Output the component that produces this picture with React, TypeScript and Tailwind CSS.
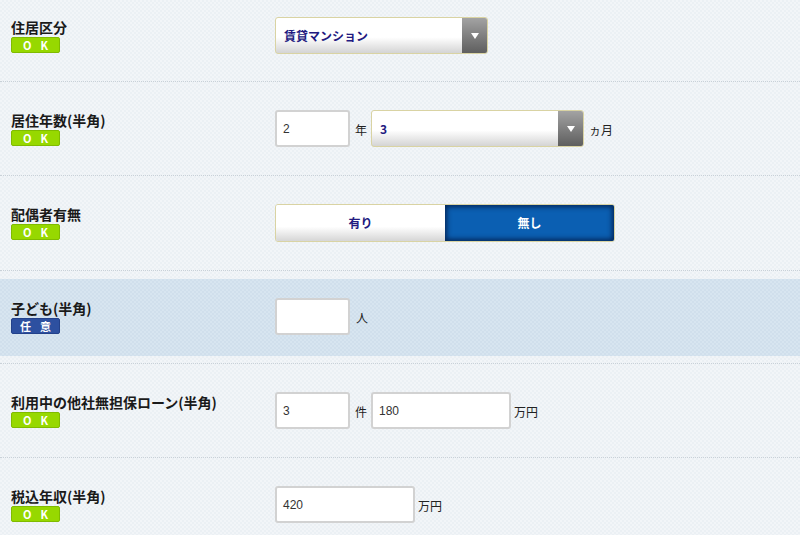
import React from 'react';

const jp = "font-['Noto_Sans_CJK_JP','Noto_Sans',sans-serif]";

type BadgeProps = { kind: 'ok' | 'optional' };

const Badge: React.FC<BadgeProps> = ({ kind }) => {
  const ok = kind === 'ok';
  return (
    <div
      className={`flex h-[16px] w-[49px] items-center justify-center gap-[9px] rounded-[2px] border text-[11px] leading-none font-bold text-white ${jp} ${
        ok ? 'border-[#80bb00] bg-[#97d800]' : 'border-[#23418a] bg-[#2d50a0]'
      }`}
    >
      {ok ? (
        <>
          <span>O</span>
          <span>K</span>
        </>
      ) : (
        <>
          <span>任</span>
          <span>意</span>
        </>
      )}
    </div>
  );
};

const Label: React.FC<{ text: string; kind?: 'ok' | 'optional' }> = ({
  text,
  kind = 'ok',
}) => (
  <div className="w-[264px] shrink-0">
    <div className={`h-[20px] text-[14px] leading-[20px] font-bold text-[#1a1a1a] ${jp}`}>
      {text}
    </div>
    <Badge kind={kind} />
  </div>
);

const Select: React.FC<{ value: string; width: string }> = ({ value, width }) => (
  <div
    className={`flex h-[37px] ${width} overflow-hidden rounded-[3px] border border-[#d9d3a3] bg-linear-to-b from-white from-55% to-[#d4d4d4]`}
  >
    <div
      className={`flex flex-1 items-center pl-[8px] text-[12px] font-bold text-[#221a80] ${jp}`}
    >
      {value}
    </div>
    <div className="flex w-[25px] items-center justify-center bg-linear-to-b from-[#a3a3a3] to-[#5f5f5f]">
      <svg width="8" height="6" viewBox="0 0 8 6">
        <path d="M0 0 H8 L4 6 Z" fill="#fff" />
      </svg>
    </div>
  </div>
);

const Input: React.FC<{ value?: string; width: string }> = ({ value = '', width }) => (
  <div
    className={`flex h-[37px] ${width} items-center rounded-[3px] border-2 border-[#d2d2d2] bg-white pl-[6px] text-[12px] text-[#333] font-['Liberation_Sans',sans-serif]`}
  >
    {value}
  </div>
);

const Unit: React.FC<{ text: string }> = ({ text }) => (
  <span className={`text-[12px] text-[#222] ${jp}`}>{text}</span>
);

const rowLine = 'border-b border-dotted border-[#c9d1d8]';

export default function App() {
  return (
    <div className="h-[535px] w-[800px] overflow-hidden bg-[#eef2f6] bg-[repeating-conic-gradient(#ebf0f4_0%_25%,#f2f5f8_0%_50%)] bg-size-[4px_4px]">
      {/* 住居区分 */}
      <div className={`flex pt-[17px] pb-[27px] pl-[11px] ${rowLine}`}>
        <Label text="住居区分" />
        <Select value="賃貸マンション" width="w-[213px]" />
      </div>

      {/* 居住年数 */}
      <div className={`flex py-[28px] pl-[11px] ${rowLine}`}>
        <Label text="居住年数(半角)" />
        <div className="flex items-center">
          <Input value="2" width="w-[75px]" />
          <span className="mr-[4px] ml-[5px]">
            <Unit text="年" />
          </span>
          <Select value="3" width="w-[213px]" />
          <span className="ml-[5px]">
            <Unit text="ヵ月" />
          </span>
        </div>
      </div>

      {/* 配偶者有無 */}
      <div className={`flex py-[28px] pl-[11px] ${rowLine}`}>
        <Label text="配偶者有無" />
        <div className="flex h-[38px] w-[340px] overflow-hidden rounded-[3px] border border-[#d9d3a3]">
          <div
            className={`flex flex-1 items-center justify-center bg-linear-to-b from-white from-60% to-[#d6d6d6] text-[12px] font-bold text-[#221a80] ${jp}`}
          >
            有り
          </div>
          <div
            className={`flex flex-1 items-center justify-center bg-[#0b5fb2] text-[12px] font-bold text-white shadow-[inset_0_0_5px_2px_rgba(0,20,60,0.75)] ${jp}`}
          >
            無し
          </div>
        </div>
      </div>

      {/* 子ども */}
      <div className={`pt-[8px] pb-[7px] ${rowLine}`}>
        <div className="flex bg-[#d3e2ee] bg-[repeating-conic-gradient(#d0dfec_0%_25%,#d7e5f0_0%_50%)] bg-size-[4px_4px] pt-[19px] pb-[21px] pl-[11px]">
          <Label text="子ども(半角)" kind="optional" />
          <div className="flex items-center">
            <Input width="w-[75px]" />
            <span className="ml-[6px]">
              <Unit text="人" />
            </span>
          </div>
        </div>
      </div>

      {/* 他社無担保ローン */}
      <div className={`flex py-[28px] pl-[11px] ${rowLine}`}>
        <Label text="利用中の他社無担保ローン(半角)" />
        <div className="flex items-center">
          <Input value="3" width="w-[75px]" />
          <span className="mr-[4px] ml-[5px]">
            <Unit text="件" />
          </span>
          <Input value="180" width="w-[140px]" />
          <span className="ml-[3px]">
            <Unit text="万円" />
          </span>
        </div>
      </div>

      {/* 税込年収 */}
      <div className="flex py-[28px] pl-[11px]">
        <Label text="税込年収(半角)" />
        <div className="flex items-center">
          <Input value="420" width="w-[140px]" />
          <span className="ml-[3px]">
            <Unit text="万円" />
          </span>
        </div>
      </div>
    </div>
  );
}
